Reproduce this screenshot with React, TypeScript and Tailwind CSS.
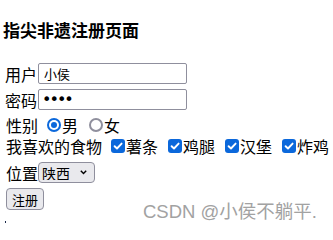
import { useState } from "react";

const foods = ["薯条", "鸡腿", "汉堡", "炸鸡"];

function CheckMark() {
  return (
    <span className="flex h-[14px] w-[14px] items-center justify-center rounded-[3px] bg-[#0b68db]">
      <svg width="10" height="10" viewBox="0 0 10 10" fill="none">
        <path d="M1.6 5.2 L4 7.5 L8.6 2.6" stroke="white" strokeWidth="1.9" strokeLinecap="round" strokeLinejoin="round" />
      </svg>
    </span>
  );
}

function Radio({ checked }: { checked: boolean }) {
  return checked ? (
    <span className="flex h-[14px] w-[14px] items-center justify-center rounded-full bg-[#0b68db]">
      <span className="flex h-[10px] w-[10px] items-center justify-center rounded-full bg-white">
        <span className="block h-[6px] w-[6px] rounded-full bg-[#0b68db]" />
      </span>
    </span>
  ) : (
    <span className="block h-[14px] w-[14px] rounded-full border-2 border-[#8f8f9d] bg-white" />
  );
}

export default function App() {
  const [name, setName] = useState("小侯");
  const [pwd, setPwd] = useState("1234");

  return (
    <div
      className="relative h-[232px] w-[333px] overflow-hidden bg-white text-[16px] text-black"
      style={{ fontFamily: '"Noto Sans CJK SC", "Liberation Sans", sans-serif' }}
    >
      {/* 标题 */}
      <h4 className="mt-[19px] flex h-[20px] items-center pl-[3px] text-[17px] font-bold leading-none">
        指尖非遗注册页面
      </h4>

      {/* 用户 */}
      <div className="mt-[24px] flex h-[21px] items-center pl-[5px] leading-none">
        <span className="w-[33px]">用户</span>
        <input
          value={name}
          onChange={(e) => setName(e.target.value)}
          className="h-[21px] w-[149px] rounded-[2px] border border-[#8f8f9d] px-[5px] text-[13px] leading-none outline-none"
        />
      </div>

      {/* 密码 */}
      <div className="mt-[5px] flex h-[21px] items-center pl-[5px] leading-none">
        <span className="w-[33px]">密码</span>
        <input
          type="password"
          value={pwd}
          onChange={(e) => setPwd(e.target.value)}
          className="h-[21px] w-[149px] rounded-[2px] border border-[#8f8f9d] px-[3px] text-[16px] leading-none tracking-[-2px] outline-none"
          style={{ fontFamily: '"DejaVu Sans", sans-serif' }}
        />
      </div>

      {/* 性别 */}
      <div className="mt-[5px] flex h-[20px] items-center pl-[6px] leading-none">
        <span>性别</span>
        <span className="ml-[9px] block">
          <Radio checked />
        </span>
        <span className="ml-[1px]">男</span>
        <span className="ml-[11px] block">
          <Radio checked={false} />
        </span>
        <span className="ml-[1px]">女</span>
      </div>

      {/* 食物 */}
      <div className="flex h-[21px] items-center gap-[10px] pl-[6px] leading-none">
        <span className="mr-[-1px]">我喜欢的食物</span>
        {foods.map((f) => (
          <span key={f} className="flex items-center">
            <CheckMark />
            <span className="ml-[1px]">{f}</span>
          </span>
        ))}
      </div>

      {/* 位置 */}
      <div className="mt-[6px] flex h-[21px] items-center pl-[6px] leading-none">
        <span className="w-[32px]">位置</span>
        <div className="relative">
          <select
            defaultValue="陕西"
            className="h-[21px] w-[57px] appearance-none rounded-[4px] border border-[#8f8f9d] bg-[#e9e9ed] pl-[3px] text-[14px] leading-none outline-none"
          >
            <option>陕西</option>
            <option>北京</option>
            <option>上海</option>
          </select>
          <svg
            className="pointer-events-none absolute right-[8px] top-[8px]"
            width="7"
            height="5"
            viewBox="0 0 7 5"
            fill="none"
          >
            <path d="M0.8 0.8 L3.5 3.6 L6.2 0.8" stroke="black" strokeWidth="1.4" />
          </svg>
        </div>
      </div>

      {/* 注册 */}
      <div className="mt-[5px] flex pl-[6px]">
        <button className="h-[22px] w-[38px] rounded-[4px] border border-[#8f8f9d] bg-[#e9e9ed] text-[13px] leading-none">
          注册
        </button>
      </div>

      <div className="ml-[5px] mt-[11px] h-[2px] w-[1px] bg-[#1b2a4a]" />

      {/* 水印 */}
      <div
        className="absolute left-[143px] top-[200px] text-[18.5px] leading-[24px] text-[#a2a2a2]"
        style={{ fontFamily: '"Liberation Sans", "Noto Sans CJK SC", sans-serif' }}
      >
        CSDN @小侯不躺平.
      </div>
    </div>
  );
}
